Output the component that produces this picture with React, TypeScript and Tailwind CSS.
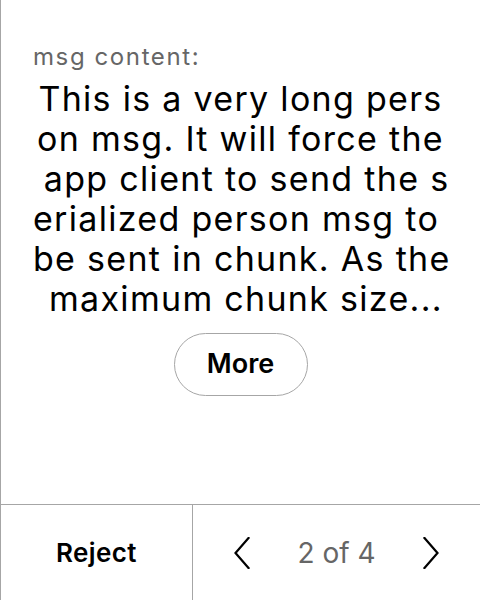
// lines are laid out as in the reference (wrapped mid-word)
const LINES = [
  "This is a very long pers",
  "on msg. It will force the",
  " app client to send the s",
  "erialized person msg to ",
  "be sent in chunk. As the",
  " maximum chunk size...",
];

function Chevron({ dir }: { dir: "left" | "right" }) {
  return (
    <svg width="16" height="32" viewBox="0 0 16 32" fill="none" className="shrink-0">
      <polyline
        points={dir === "left" ? "14.5,1 1.5,16 14.5,31" : "1.5,1 14.5,16 1.5,31"}
        stroke="#000"
        strokeWidth="2.2"
        strokeLinecap="square"
        strokeLinejoin="miter"
      />
    </svg>
  );
}

export default function App() {
  return (
    <div className="flex h-[600px] w-[480px] flex-col border-l border-[#a6a6a6] bg-white font-['Inter',sans-serif] text-black">
      <div className="flex flex-1 flex-col px-8 pt-[43px]">
        <p className="text-[24px] leading-7 tracking-[1.6px] text-[#666]">msg content:</p>
        <div className="mt-[8px] text-center text-[34px] leading-10 tracking-[1.3px]">
          {LINES.map((line, i) => (
            <p key={i} className="whitespace-pre">
              {line}
            </p>
          ))}
        </div>
        <div className="mt-[14px] flex justify-center">
          <button className="h-[63px] w-[134px] rounded-full border border-[#a6a6a6] text-[27px] font-semibold">
            More
          </button>
        </div>
      </div>
      <div className="flex h-24 border-t border-[#a6a6a6]">
        <button className="flex w-[192px] items-center justify-center border-r border-[#a6a6a6] text-[26px] font-semibold tracking-[0.4px]">
          Reject
        </button>
        <div className="flex flex-1 items-center justify-center gap-[47px]">
          <Chevron dir="left" />
          <span className="text-[28px] text-[#666]">2 of 4</span>
          <Chevron dir="right" />
        </div>
      </div>
    </div>
  );
}
